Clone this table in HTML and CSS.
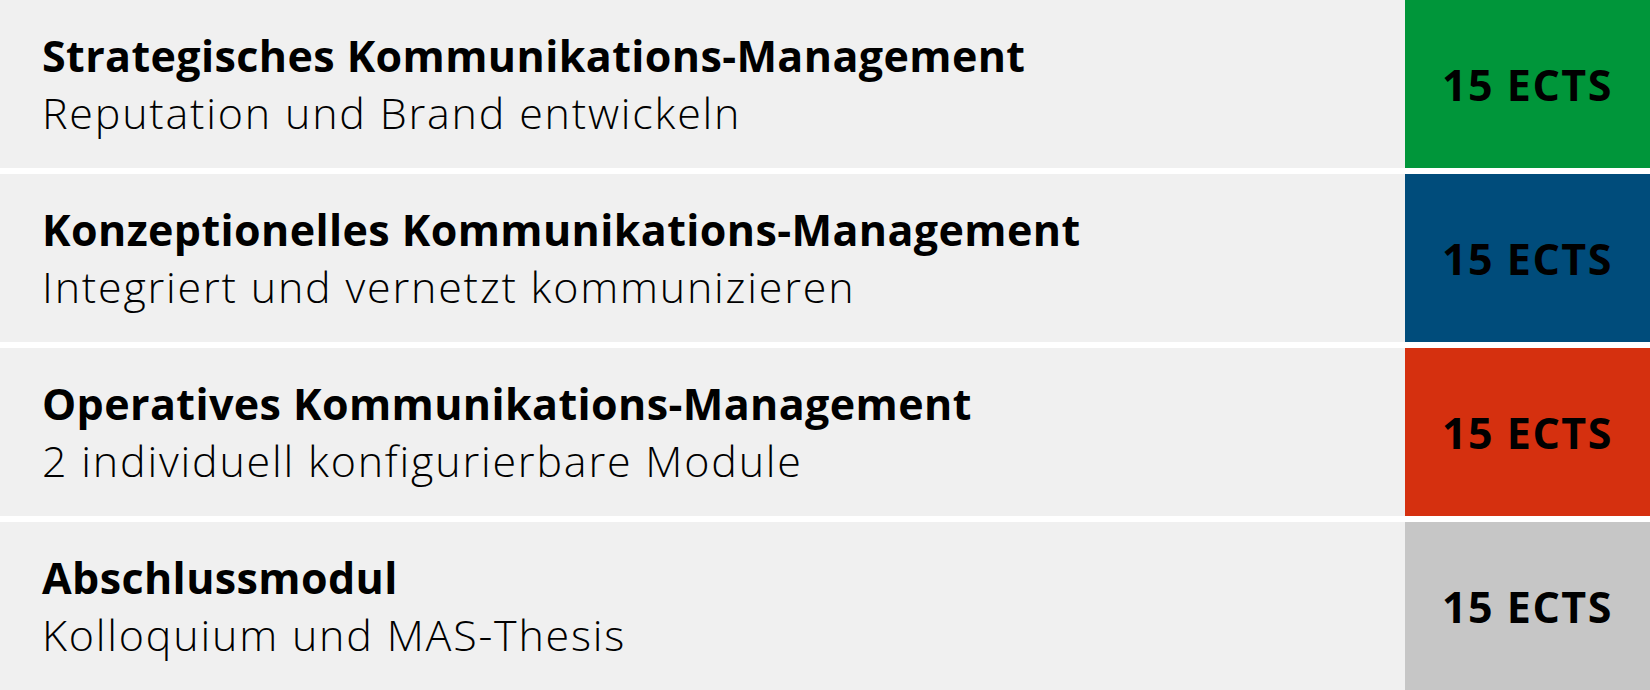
FILE: index.html
```html
<!DOCTYPE html>
<html lang="de">
<head>
<meta charset="utf-8">
<title>Module</title>
<link rel="stylesheet" href="styles.css">
</head>
<body>
<div class="list">
  <div class="row">
    <div class="info">
      <div class="title">Strategisches Kommunikations-Management</div>
      <div class="sub">Reputation und Brand entwickeln</div>
    </div>
    <div class="ects green">15 ECTS</div>
  </div>
  <div class="row">
    <div class="info">
      <div class="title">Konzeptionelles Kommunikations-Management</div>
      <div class="sub">Integriert und vernetzt kommunizieren</div>
    </div>
    <div class="ects blue">15 ECTS</div>
  </div>
  <div class="row">
    <div class="info">
      <div class="title">Operatives Kommunikations-Management</div>
      <div class="sub">2 individuell konfigurierbare Module</div>
    </div>
    <div class="ects red">15 ECTS</div>
  </div>
  <div class="row">
    <div class="info">
      <div class="title">Abschlussmodul</div>
      <div class="sub">Kolloquium und MAS-Thesis</div>
    </div>
    <div class="ects grey">15 ECTS</div>
  </div>
</div>
</body>
</html>
```
FILE: styles.css
```css
html, body {
  margin: 0;
  padding: 0;
  background: #ffffff;
}
body {
  font-family: "Open Sans", "Liberation Sans", sans-serif;
  color: #000;
}
.list {
  display: flex;
  flex-direction: column;
  gap: 6px;
  width: 1650px;
}
.row {
  display: flex;
  height: 168px;
  background: #f0f0f0;
}
.info {
  flex: 1;
  display: flex;
  flex-direction: column;
  justify-content: center;
  padding-left: 42px;
  padding-top: 4px;
}
.title {
  font-weight: 700;
  font-size: 43px;
  line-height: 54px;
  letter-spacing: 0.4px;
}
.sub {
  font-weight: 300;
  font-size: 43px;
  line-height: 60px;
  letter-spacing: 1.8px;
}
.ects {
  width: 245px;
  display: flex;
  align-items: center;
  justify-content: center;
  font-weight: 700;
  font-size: 43px;
  letter-spacing: 1.5px;
}
.green { background: #00963a; }
.blue { background: #004c7b; }
.red { background: #d5300f; }
.grey { background: #c6c6c6; }
```
